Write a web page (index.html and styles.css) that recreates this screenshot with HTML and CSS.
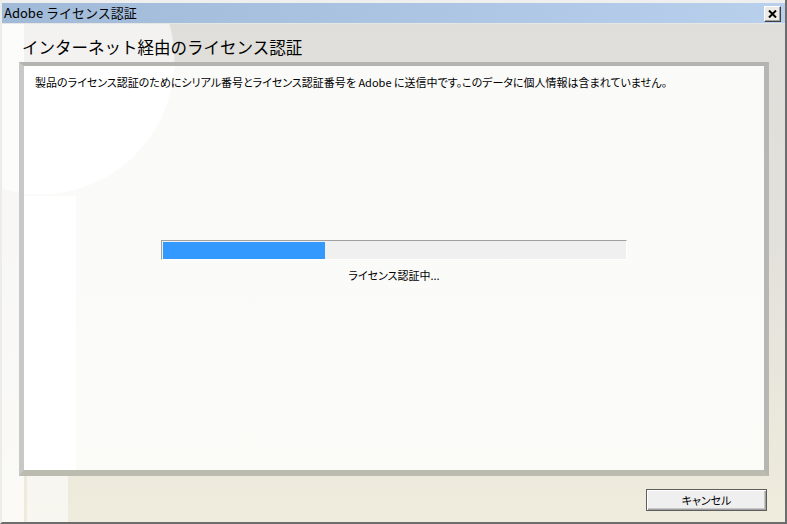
FILE: index.html
```html
<!DOCTYPE html>
<html lang="ja">
<head>
<meta charset="utf-8">
<title>Adobe ライセンス認証</title>
<link rel="stylesheet" href="styles.css">
</head>
<body>
<div class="window">
  <div class="titlebar">
    <span class="title">Adobe ライセンス認証</span>
    <span class="close" aria-label="閉じる">
      <svg width="9" height="8" viewBox="0 0 9 8"><path d="M1 0.5 L8 7.5 M8 0.5 L1 7.5" stroke="#000" stroke-width="2" fill="none"/></svg>
    </span>
  </div>
  <div class="content">
    <h1 class="heading">インターネット経由のライセンス認証</h1>
    <div class="panel">
      <p class="message">製品のライセンス認証のためにシリアル番号とライセンス認証番号を Adobe に送信中です。このデータに個人情報は含まれていません。</p>
      <div class="progress">
        <div class="progress-fill" style="width: 35%"></div>
      </div>
      <p class="progress-label">ライセンス認証中...</p>
    </div>
    <div class="footer">
      <button class="button">キャンセル</button>
    </div>
  </div>
</div>
</body>
</html>
```

FILE: styles.css
```css
html, body {
  margin: 0;
  padding: 0;
  background: #ffffff;
}

body {
  font-family: "Noto Sans CJK JP", "Noto Sans", sans-serif;
  color: #000;
}

.window {
  width: 787px;
  height: 524px;
  box-sizing: border-box;
  display: flex;
  flex-direction: column;
  border-left: 2px solid #ececea;
  border-right: 2px solid #6d6d6d;
  border-bottom: 2px solid #6d6d6d;
  overflow: hidden;
}

.titlebar {
  height: 20px;
  border-top: 3px solid #efefef;
  background: linear-gradient(90deg, #a1bad8 0%, #abc4e2 50%, #b8d0ec 100%);
  display: flex;
  align-items: center;
  justify-content: space-between;
  padding-left: 2px;
  padding-right: 4px;
}

.title {
  font-size: 13px;
  line-height: 16px;
}

.close {
  width: 15px;
  height: 14px;
  margin-top: 1px;
  background: #ecebe7;
  border: 1px solid;
  border-color: #ffffff #404040 #404040 #ffffff;
  box-shadow: inset -1px -1px 0 #a0a0a0;
  display: flex;
  align-items: center;
  justify-content: center;
}

.content {
  flex: 1;
  display: flex;
  flex-direction: column;
  border-top: 1px solid #e6e6e4;
  background:
    radial-gradient(circle 135px at 38px 36px, rgba(255,255,255,0.6) 99%, rgba(255,255,255,0) 100%),
    linear-gradient(90deg, rgba(255,255,255,0.75) 0, rgba(255,255,255,0.75) 22px, rgba(255,255,255,0) 22px),
    linear-gradient(90deg, rgba(255,255,255,0) 25px, rgba(255,255,255,0.55) 25px, rgba(255,255,255,0.55) 66px, rgba(255,255,255,0) 66px) 0 100% / 100% 46px no-repeat,
    linear-gradient(180deg, #dfdeda 0%, #e3e1db 45%, #efecdd 100%);
}

.heading {
  margin: 0;
  padding: 13px 0 0 20px;
  font-size: 16.5px;
  line-height: 20px;
  font-weight: normal;
  height: 20px;
}

.panel {
  margin: 5px 0 0 17px;
  width: 750px;
  height: 414px;
  box-sizing: border-box;
  border-style: solid;
  border-width: 4px 5px 6px 5px;
  border-color: #b3b3af #b6b6b2 #bcbbb0 #c8c8c8;
  display: flex;
  flex-direction: column;
  align-items: center;
  background:
    radial-gradient(circle 135px at 16px -6px, #ffffff 99%, rgba(255,255,255,0) 100%),
    linear-gradient(90deg, #ffffff 0, #ffffff 52px, rgba(255,255,255,0) 52px) 0 130px / 100% 100% no-repeat,
    linear-gradient(180deg, #fafaf9 0%, #fbfbf8 100%);
}

.message {
  align-self: stretch;
  margin: 0;
  padding: 8px 0 0 11px;
  font-size: 11px;
  line-height: 16px;
  font-feature-settings: "palt";
  white-space: nowrap;
}

.progress {
  margin-top: 150px;
  width: 466px;
  height: 20px;
  box-sizing: border-box;
  border-style: solid;
  border-width: 1px;
  border-color: #a0a0a0 #ffffff #ffffff #a0a0a0;
  padding: 1px 1px 0 1px;
  background: #f0f0f0;
}

.progress-fill {
  height: 17px;
  background: #3399ff;
}

.progress-label {
  margin: 7px 0 0 0;
  font-size: 11px;
  line-height: 16px;
  font-feature-settings: "palt";
}

.footer {
  display: flex;
  justify-content: flex-end;
  padding: 13px 18px 0 0;
}

.button {
  width: 121px;
  height: 22px;
  box-sizing: border-box;
  padding: 0;
  font-family: "Noto Sans CJK JP", "Noto Sans", sans-serif;
  font-size: 11px;
  line-height: 14px;
  color: #000;
  background: #efefef;
  border: 1px solid #5e5e5e;
  box-shadow: inset 1px 1px 0 #ffffff, inset -1px -1px 0 #a0a0a0, inset -2px -2px 0 #c8c8c8;
  font-feature-settings: "palt";
}
```
